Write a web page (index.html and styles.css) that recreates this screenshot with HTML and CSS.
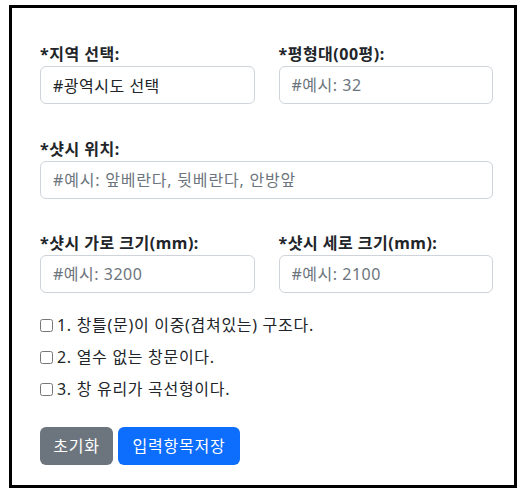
FILE: index.html
```html
<!DOCTYPE html>
<html lang="ko">
<head>
<meta charset="utf-8">
<link rel="stylesheet" href="styles.css">
</head>
<body>
<form class="panel">
  <div class="row">
    <div class="field">
      <label class="label">*지역 선택:</label>
      <input class="control" type="text" value="#광역시도 선택" readonly>
    </div>
    <div class="field">
      <label class="label">*평형대(00평):</label>
      <input class="control" type="text" placeholder="#예시: 32">
    </div>
  </div>
  <div class="row row-gap">
    <div class="field">
      <label class="label">*샷시 위치:</label>
      <input class="control wide" type="text" placeholder="#예시: 앞베란다, 뒷베란다, 안방앞">
    </div>
  </div>
  <div class="row row-gap2">
    <div class="field">
      <label class="label">*샷시 가로 크기(mm):</label>
      <input class="control" type="text" placeholder="#예시: 3200">
    </div>
    <div class="field">
      <label class="label">*샷시 세로 크기(mm):</label>
      <input class="control" type="text" placeholder="#예시: 2100">
    </div>
  </div>
  <div class="checks">
    <label class="check"><input type="checkbox" class="box"> 1. 창틀(문)이 이중(겹쳐있는) 구조다.</label>
    <label class="check"><input type="checkbox" class="box"> 2. 열수 없는 창문이다.</label>
    <label class="check"><input type="checkbox" class="box"> 3. 창 유리가 곡선형이다.</label>
  </div>
  <div class="buttons">
    <button type="button" class="btn btn-gray">초기화</button>
    <button type="button" class="btn btn-blue">입력항목저장</button>
  </div>
</form>
</body>
</html>
```
FILE: styles.css
```css
* { box-sizing: border-box; }
html, body { margin: 0; background: #fff; }
body {
  font-family: "Noto Sans", "Noto Sans CJK KR", sans-serif;
  font-size: 16px;
  line-height: 24px;
  color: #212529;
}
.panel {
  margin: 5px 0 0 9px;
  width: 508px;
  height: 483px;
  border: 3px solid #000;
  padding: 34px 21px 0 28px;
  display: flex;
  flex-direction: column;
}
.row {
  display: flex;
  gap: 24px;
}
.row-gap { margin-top: 33px; }
.row-gap2 { margin-top: 32px; }
.field {
  flex: 1 1 0;
  display: flex;
  flex-direction: column;
  min-width: 0;
}
.label {
  font-weight: 700;
  height: 24px;
  letter-spacing: 0.5px;
}
.control {
  height: 38px;
  width: 100%;
  border: 1px solid #ced4da;
  border-radius: 6px;
  padding: 6px 12px;
  font: inherit;
  color: #212529;
  outline: none;
  letter-spacing: 0.5px;
}
.control.wide { letter-spacing: 0.8px; }
.control::placeholder { color: #6c757d; }
.checks {
  margin-top: 20px;
  display: flex;
  flex-direction: column;
  gap: 8px;
}
.check {
  display: flex;
  align-items: center;
  gap: 4px;
  height: 24px;
  letter-spacing: 0.7px;
}
.box {
  margin: 0;
  width: 13px;
  height: 13px;
}
.buttons {
  margin-top: 26px;
  display: flex;
  gap: 5px;
}
.btn {
  height: 38px;
  padding: 6px 12px;
  border: 1px solid transparent;
  border-radius: 6px;
  font: inherit;
  color: #fff;
  letter-spacing: 0.8px;
}
.btn-gray { background: #6c757d; width: 73px; }
.btn-blue { background: #0d6efd; width: 122px; }
```
